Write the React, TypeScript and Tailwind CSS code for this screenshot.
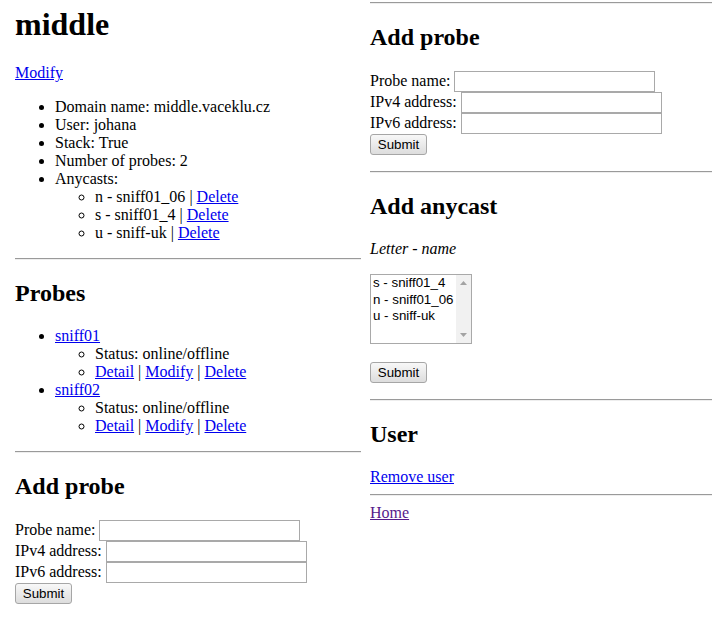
const link = "text-[#0000ee] underline";

function Rule({ className = "" }: { className?: string }) {
  return <hr className={`h-0 border-0 border-t border-b border-t-[#9a9a9a] border-b-[#eeeeee] ${className}`} />;
}

function Field({ label }: { label: string }) {
  return (
    <div className="flex items-center h-[21px]">
      <span>{label}</span>
      <input
        type="text"
        className="ml-[4px] w-[201px] h-[21px] border border-[#a9a9a9] bg-white px-[2px] text-[13.33px] font-['Liberation_Sans',sans-serif] outline-none"
      />
    </div>
  );
}

function SubmitButton({ className = "" }: { className?: string }) {
  return (
    <button
      type="button"
      className={`block w-[57px] h-[21px] border border-[#a6a6a6] rounded-[3px] bg-gradient-to-b from-[#f8f8f8] to-[#dddddd] text-[13.33px] leading-[15px] text-black font-['Liberation_Sans',sans-serif] ${className}`}
    >
      Submit
    </button>
  );
}

function ProbeForm({ className = "" }: { className?: string }) {
  return (
    <form className={className} onSubmit={(e) => e.preventDefault()}>
      <Field label="Probe name:" />
      <Field label="IPv4 address:" />
      <Field label="IPv6 address:" />
      <SubmitButton />
    </form>
  );
}

function Pipe() {
  return <span className="text-black"> | </span>;
}

const anycasts = [
  { letter: "n", name: "sniff01_06" },
  { letter: "s", name: "sniff01_4" },
  { letter: "u", name: "sniff-uk" },
];

const probes = ["sniff01", "sniff02"];

function AnycastSelect() {
  const options = ["s - sniff01_4", "n - sniff01_06", "u - sniff-uk"];
  return (
    <div className="mt-[16px] flex w-[102px] h-[70px] border border-[#a9a9a9] bg-white font-['Liberation_Sans',sans-serif] text-[13.33px] text-black">
      <div className="flex-1 pt-[0.5px]">
        {options.map((o) => (
          <div key={o} className="h-[16.6px] leading-[15px] pl-[2px] whitespace-nowrap">
            {o}
          </div>
        ))}
      </div>
      <div className="w-[15px] bg-[#f1f1f1] flex flex-col justify-between items-center py-[6px]">
        <svg width="7" height="4" viewBox="0 0 7 4">
          <path d="M0 4 L3.5 0 L7 4 Z" fill="#a3a3a3" />
        </svg>
        <svg width="7" height="4" viewBox="0 0 7 4">
          <path d="M0 0 L7 0 L3.5 4 Z" fill="#a3a3a3" />
        </svg>
      </div>
    </div>
  );
}

export default function App() {
  return (
    <div className="min-h-[620px] bg-white text-black font-['Liberation_Serif',serif] text-[16px] leading-[18px]">
      <div className="flex items-start pl-[15px]">
        {/* Left column */}
        <div className="w-[346px]">
          <h1 className="mt-[5.5px] text-[32px] leading-[37px] font-bold">middle</h1>
          <p className="mt-[21.44px]">
            <a href="#" className={link}>Modify</a>
          </p>
          <ul className="mt-[16px] list-disc pl-[40px]">
            <li>Domain name: middle.vaceklu.cz</li>
            <li>User: johana</li>
            <li>Stack: True</li>
            <li>Number of probes: 2</li>
            <li>
              Anycasts:
              <ul className="list-[circle] pl-[40px]">
                {anycasts.map((a) => (
                  <li key={a.letter}>
                    {a.letter} - {a.name}
                    <Pipe />
                    <a href="#" className={link}>Delete</a>
                  </li>
                ))}
              </ul>
            </li>
          </ul>
          <Rule className="mt-[16px]" />

          <h2 className="mt-[19.92px] text-[24px] leading-[27px] font-bold">Probes</h2>
          <ul className="mt-[19.92px] list-disc pl-[40px]">
            {probes.map((p) => (
              <li key={p}>
                <a href="#" className={link}>{p}</a>
                <ul className="list-[circle] pl-[40px]">
                  <li>Status: online/offline</li>
                  <li>
                    <a href="#" className={link}>Detail</a>
                    <Pipe />
                    <a href="#" className={link}>Modify</a>
                    <Pipe />
                    <a href="#" className={link}>Delete</a>
                  </li>
                </ul>
              </li>
            ))}
          </ul>
          <Rule className="mt-[16px]" />

          <h2 className="mt-[19.92px] text-[24px] leading-[27px] font-bold">Add probe</h2>
          <ProbeForm className="mt-[19.92px]" />
        </div>

        {/* Right column */}
        <div className="ml-[9px] w-[342px]">
          <Rule className="mt-[2px]" />
          <h2 className="mt-[19.92px] text-[24px] leading-[27px] font-bold">Add probe</h2>
          <ProbeForm className="mt-[19.92px]" />
          <Rule className="mt-[16px]" />

          <h2 className="mt-[19.92px] text-[24px] leading-[27px] font-bold">Add anycast</h2>
          <p className="mt-[20px] italic">Letter - name</p>
          <AnycastSelect />
          <SubmitButton className="mt-[18px]" />
          <Rule className="mt-[16px]" />

          <h2 className="mt-[19.92px] text-[24px] leading-[27px] font-bold">User</h2>
          <div className="mt-[19.92px]">
            <a href="#" className={link}>Remove user</a>
          </div>
          <Rule className="mt-[8px]" />
          <div className="mt-[8px]">
            <a href="#" className="text-[#551a8b] underline">Home</a>
          </div>
        </div>
      </div>
    </div>
  );
}
